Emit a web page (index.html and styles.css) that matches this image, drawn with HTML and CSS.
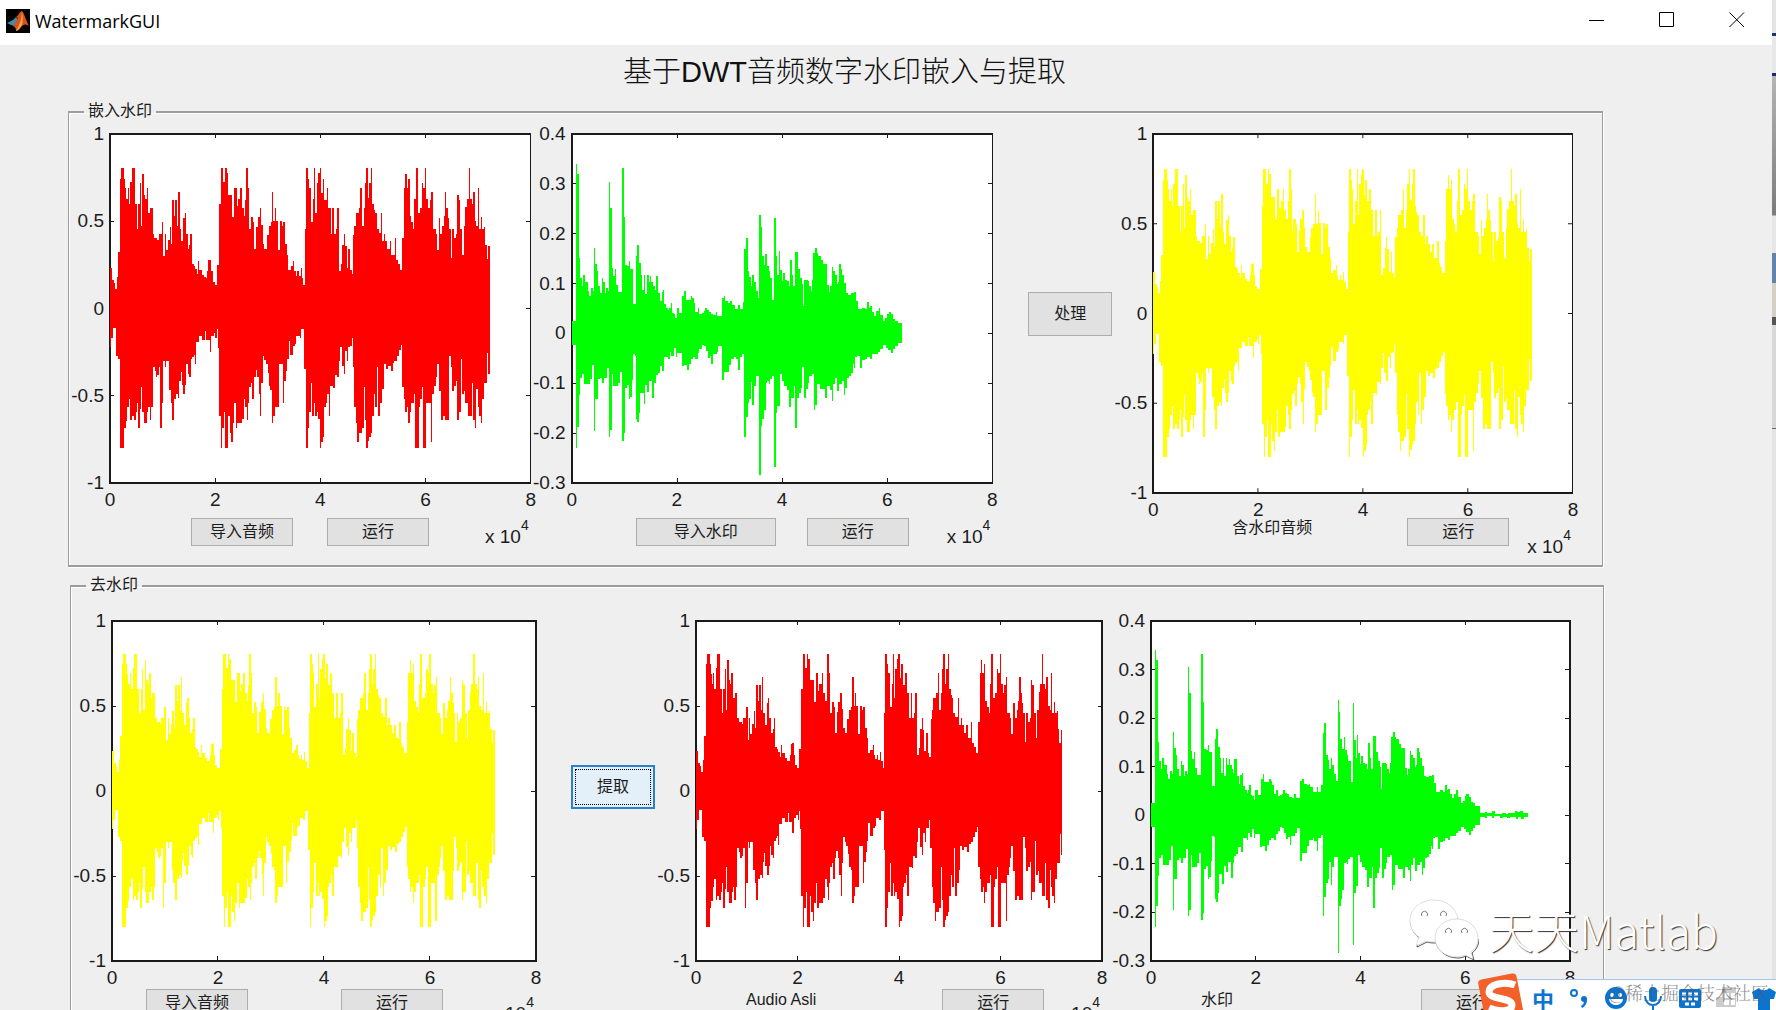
FILE: index.html
```html
<!DOCTYPE html>
<html lang="zh-CN">
<head>
  <meta charset="UTF-8" />
  <meta name="viewport" content="width=device-width, initial-scale=1.0" />
  <title>WatermarkGUI</title>
  <link rel="stylesheet" href="styles.css">
</head>
<body>
  <div class="desktop">
    <div class="window">
      <header class="titlebar">
        <svg class="app-icon" viewBox="0 0 24 24" aria-hidden="true">
          <rect width="24" height="24" fill="#000" />
          <path d="M1 14 L7 11 L10 8 L12 11 L8 17 L5 16 Z" fill="#3f8fa8" />
          <path d="M10 8 C13 6 14 2 16 2 C18 4 20 11 23 17 C20 15 18 15 16 17 C14 20 12 22 10 22 C10 19 9 18 7 17 C10 14 10 11 12 9 Z" fill="#d4541c" />
          <path d="M16 2 C16 9 14 15 10 22 C13 21 14 18 16 16 C17 12 17 7 16 2 Z" fill="#f5a04a" />
        </svg>
        <span class="app-name">WatermarkGUI</span>
        <button class="win-btn" aria-label="Minimize"><svg viewBox="0 0 16 16"><path d="M0 8.5H15" /></svg></button>
        <button class="win-btn" aria-label="Maximize"><svg viewBox="0 0 16 16"><path d="M.5 .5H14.5V14.5H.5Z" /></svg></button>
        <button class="win-btn" aria-label="Close"><svg viewBox="0 0 16 16"><path d="M.5 .5L15 15M15 .5L.5 15" /></svg></button>
      </header>

      <main>
        <h1>基于DWT音频数字水印嵌入与提取</h1>

        <fieldset class="panel embed">
          <legend>嵌入水印</legend>
          <div class="row">
            <div class="figure">
              <div class="ylabels"><span>1</span><span>0.5</span><span>0</span><span>-0.5</span><span>-1</span></div>
              <svg class="axes" data-wave="audio" data-color="#ff0000"></svg>
              <div class="xlabels"><span>0</span><span>2</span><span>4</span><span>6</span><span>8</span></div>
              <div class="controls import-audio">
                <button class="btn">导入音频</button>
                <button class="btn">运行</button>
                <span class="exponent">x 10<sup>4</sup></span>
              </div>
            </div>
            <div class="figure">
              <div class="ylabels"><span>0.4</span><span>0.3</span><span>0.2</span><span>0.1</span><span>0</span><span>-0.1</span><span>-0.2</span><span>-0.3</span></div>
              <svg class="axes" data-wave="mark" data-color="#00ff00"></svg>
              <div class="xlabels"><span>0</span><span>2</span><span>4</span><span>6</span><span>8</span></div>
              <div class="controls import-mark">
                <button class="btn wide">导入水印</button>
                <button class="btn">运行</button>
                <span class="exponent">x 10<sup>4</sup></span>
              </div>
            </div>
            <div class="action"><button class="btn big">处理</button></div>
            <div class="figure tall">
              <div class="ylabels"><span>1</span><span>0.5</span><span>0</span><span>-0.5</span><span>-1</span></div>
              <svg class="axes" data-wave="audio" data-color="#ffff00"></svg>
              <div class="xlabels"><span>0</span><span>2</span><span>4</span><span>6</span><span>8</span></div>
              <div class="controls">
                <span class="caption">含水印音频</span>
                <button class="btn">运行</button>
                <span class="exponent">x 10<sup>4</sup></span>
              </div>
            </div>
          </div>
        </fieldset>

        <fieldset class="panel extract">
          <legend>去水印</legend>
          <div class="row">
            <div class="figure">
              <div class="ylabels"><span>1</span><span>0.5</span><span>0</span><span>-0.5</span><span>-1</span></div>
              <svg class="axes" data-wave="audio" data-color="#ffff00"></svg>
              <div class="xlabels"><span>0</span><span>2</span><span>4</span><span>6</span><span>8</span></div>
              <div class="controls import-marked">
                <button class="btn">导入音频</button>
                <button class="btn">运行</button>
                <span class="exponent">x 10<sup>4</sup></span>
              </div>
            </div>
            <div class="action"><button class="btn big focused">提取</button></div>
            <div class="figure">
              <div class="ylabels"><span>1</span><span>0.5</span><span>0</span><span>-0.5</span><span>-1</span></div>
              <svg class="axes" data-wave="audio" data-color="#ff0000"></svg>
              <div class="xlabels"><span>0</span><span>2</span><span>4</span><span>6</span><span>8</span></div>
              <div class="controls result">
                <span class="caption">Audio Asli</span>
                <button class="btn">运行</button>
                <span class="exponent">x 10<sup>4</sup></span>
              </div>
            </div>
            <div class="figure spaced">
              <div class="ylabels"><span>0.4</span><span>0.3</span><span>0.2</span><span>0.1</span><span>0</span><span>-0.1</span><span>-0.2</span><span>-0.3</span></div>
              <svg class="axes" data-wave="mark" data-color="#00ff00" data-tail="1"></svg>
              <div class="xlabels"><span>0</span><span>2</span><span>4</span><span>6</span><span>8</span></div>
              <div class="controls result">
                <span class="caption">水印</span>
                <button class="btn">运行</button>
              </div>
            </div>
          </div>
        </fieldset>
      </main>
    </div>
    <div class="backdrop"></div>
  </div>

  <div class="signature">
    <svg viewBox="0 0 70 62" aria-hidden="true">
      <g class="shade" transform="translate(1 1)">
        <path d="M1 22c0 7 4 13 9 16l-3 9 10-5c3 1 6 1 10 1" />
        <path d="M50 20c-14 0-24 8-24 19s10 19 22 19c3 0 6-1 8-2l8 4-2-7c4-3 7-8 7-14" />
      </g>
      <path class="face" d="M25 1C11 1 1 10 1 22c0 7 4 13 9 16l-3 9 10-5c3 1 6 1 10 1 0-13 9-22 22-23C47 9 38 1 25 1z" />
      <path class="face" d="M48 20c-12 0-22 8-22 19s10 19 22 19c3 0 6-1 8-2l8 4-2-7c4-3 7-8 7-14 0-11-10-19-21-19z" />
      <path class="eyes" d="M13 17a3 3 0 1 1 5 0M32 17a3 3 0 1 1 5 0M37 34a3 3 0 1 1 5 0M53 34a3 3 0 1 1 5 0" />
    </svg>
    <span>天天Matlab</span>
  </div>

  <div class="ime">
    <svg class="sogou" viewBox="0 0 48 48" aria-hidden="true">
      <rect x="4" y="4" width="39" height="42" rx="4" transform="rotate(-11 24 24)" fill="#f4602a" />
      <path d="M38 13C28 9 12 12 12 20c0 8 23 5 23 13 0 7-14 7-23 3" fill="none" stroke="#fff" stroke-width="7" />
    </svg>
    <div class="ime-bar">
      <span class="ime-lang">中</span>
      <svg viewBox="0 0 24 24"><circle cx="7" cy="7" r="3" fill="none" stroke="#0b74d1" stroke-width="2" /><circle cx="17" cy="13" r="3" /><path d="M20 13c0 4-1 7-5 9l-1-2c2-1 3-3 3-5z" /></svg>
      <svg viewBox="0 0 24 24"><circle cx="12" cy="12" r="11" /><circle cx="8" cy="9" r="2" fill="#fff" /><circle cx="16" cy="9" r="2" fill="#fff" /><path d="M5 13h14c-1 8-13 8-14 0z" fill="#fff" /></svg>
      <svg viewBox="0 0 24 24"><rect x="8" y="1" width="8" height="15" rx="4" /><path d="M4 10c0 12 16 12 16 0M12 19v5" fill="none" stroke="#0b74d1" stroke-width="2" /></svg>
      <svg viewBox="0 0 24 24"><rect x="1" y="3" width="22" height="19" rx="2" /><path d="M4 8h16M4 13h16M7 18h10" stroke="#fff" stroke-width="3" stroke-dasharray="4 2" /></svg>
      <svg class="muted" viewBox="0 0 24 24"><path d="M7 1h14v20H1V11h6z" /><path d="M9 14h5v5H9zM16 14h4v5h-4zM9 7h5v5H9zM16 7h4v5h-4z" fill="#fff" /></svg>
      <svg viewBox="0 0 24 24"><path d="M7 2c2 3 8 3 10 0l7 4-2 7h-4v11H6V13H2L0 6z" /></svg>
    </div>
    <span class="community">@稀土掘金技术社区</span>
  </div>

  <script src="waves.js"></script>
</body>
</html>
```

FILE: waves.js
```js
// Envelopes as "x:level" steps on a 1260 x 1048 grid that starts at the origin below
const waves = {
  audio: {
    x: 151, y: 43, end: 1288, rows: 4,
    top: '151:445 157:480 162:490 166:508 172:472 176:397 181:177 185:145 193:177 197:205 200:238 204:204 208:252 212:188 217:145 225:252 231:328 236:252 240:190 244:318 248:163 252:226 257:238 261:204 266:279 271:266 279:342 284:355 293:362 298:342 306:307 311:409 316:342 320:392 325:360 330:321 334:373 338:240 343:290 347:240 352:318 356:217 360:328 365:363 371:295 375:279 379:342 384:387 389:376 392:343 397:432 402:438 406:448 411:462 415:425 419:450 428:465 433:473 439:475 443:455 446:422 450:420 454:455 458:486 464:495 472:437 478:253 482:145 490:188 496:145 500:160 504:226 513:226 517:292 523:204 530:260 534:238 541:204 545:266 551:290 556:240 559:145 564:204 567:328 572:292 579:307 583:387 588:322 593:292 599:266 604:315 608:373 613:387 621:345 626:318 632:307 636:217 640:305 645:266 649:304 655:392 661:304 666:318 670:307 676:373 681:405 685:450 692:440 699:425 703:455 707:468 712:455 716:470 722:446 725:476 730:495 735:328 739:145 744:177 748:204 752:307 758:238 762:145 766:279 770:190 775:160 779:145 784:220 788:177 792:240 800:204 805:266 812:342 817:266 822:342 828:328 832:266 837:455 842:433 847:376 851:343 855:378 860:445 865:387 870:450 875:462 879:345 883:318 888:280 897:265 901:204 906:318 911:266 915:190 919:145 924:236 928:190 933:145 937:252 941:270 945:279 950:328 956:340 963:280 967:363 972:342 976:363 982:387 990:365 994:405 1004:355 1009:420 1014:432 1020:450 1027:355 1031:204 1036:162 1040:204 1045:177 1049:290 1054:307 1059:328 1063:238 1067:145 1072:279 1080:266 1084:190 1089:204 1094:145 1098:238 1104:265 1108:240 1113:217 1117:328 1126:342 1130:392 1135:295 1140:342 1146:318 1150:290 1154:217 1158:266 1163:295 1167:328 1171:415 1176:328 1180:355 1186:343 1190:226 1195:240 1199:328 1205:405 1210:318 1215:262 1219:238 1225:145 1229:238 1235:252 1238:217 1243:304 1248:318 1253:204 1257:328 1262:292 1266:328 1270:321 1274:377 1279:418 1284:380',
    bottom: '151:684 153:655 161:626 170:710 176:720 181:985 193:927 198:905 203:863 208:838 212:903 217:890 222:903 228:877 231:850 235:927 240:870 244:802 248:877 253:912 262:877 266:863 270:903 275:863 279:742 285:755 289:774 293:768 298:742 302:927 306:850 311:725 316:742 320:725 328:812 333:850 338:903 343:838 350:825 355:836 359:785 363:757 366:798 371:825 376:798 380:735 385:764 389:774 393:720 398:712 403:707 406:733 410:668 417:650 426:662 436:635 440:662 450:697 454:650 462:640 466:655 470:630 474:685 478:890 483:985 487:927 492:877 496:985 504:890 509:940 514:967 518:912 523:850 527:927 532:912 546:898 551:838 556:863 560:903 564:850 568:802 574:790 577:838 582:774 587:752 591:774 596:825 600:890 604:790 608:710 613:723 618:735 623:760 627:800 631:812 636:912 640:890 645:863 658:735 668:850 672:785 678:755 682:720 686:665 690:707 700:680 705:675 709:650 720:657 724:630 733:750 738:985 743:927 748:877 752:790 757:890 762:850 766:890 770:877 775:900 780:985 784:967 789:952 793:863 797:850 802:825 806:890 811:800 820:805 824:768 832:774 836:725 841:682 846:740 851:765 856:695 862:725 865:682 871:680 875:657 878:742 883:863 887:912 892:967 896:940 906:927 911:802 915:903 919:985 924:965 928:952 933:940 937:890 942:825 946:863 951:742 955:890 960:850 966:810 971:735 978:750 984:740 992:755 998:730 1003:725 1010:710 1016:692 1022:678 1027:802 1032:838 1036:877 1041:863 1045:912 1049:877 1054:850 1062:825 1066:985 1075:863 1080:838 1085:802 1089:985 1098:850 1112:967 1116:825 1122:800 1126:774 1130:735 1135:815 1142:903 1148:890 1153:903 1165:815 1167:710 1172:742 1176:815 1181:800 1186:785 1190:903 1195:877 1202:720 1206:825 1211:815 1215:850 1224:890 1234:790 1238:903 1243:927 1248:810 1252:863 1257:890 1262:912 1266:838 1270:790 1280:700 1284:765'
  },
  mark: {
    x: 157, y: 43, end: 1145, rows: 7,
    top: '157:605 168:132 172:162 177:415 181:475 186:500 191:465 196:487 204:515 209:530 214:505 219:515 223:385 227:433 231:455 236:500 240:520 246:475 250:487 255:520 260:505 265:515 268:186 272:265 276:445 281:468 286:447 290:495 296:517 308:145 313:292 317:437 322:440 327:425 331:447 340:553 348:408 353:375 358:430 363:465 367:510 373:465 377:522 382:465 387:487 391:468 395:487 401:500 405:512 408:468 416:520 421:545 426:518 430:510 434:553 440:565 445:573 449:565 453:550 457:580 462:583 466:595 470:565 478:580 487:530 493:515 497:540 507:540 513:530 517:535 521:550 526:577 534:565 538:583 546:580 551:575 555:565 561:573 566:577 572:585 580:588 588:577 592:590 606:535 611:530 616:545 625:550 631:545 636:555 645:570 655:555 660:570 668:547 673:388 678:356 683:455 688:472 692:500 697:465 701:487 707:515 713:535 718:285 722:322 726:408 731:437 736:402 740:440 746:455 750:475 757:540 763:295 767:410 772:465 777:393 781:450 786:483 790:460 795:480 800:483 806:500 811:420 815:465 820:500 826:397 835:447 840:475 845:493 849:560 852:480 863:483 868:500 872:513 876:480 880:400 885:385 890:400 895:408 903:422 909:433 920:497 926:517 931:500 935:443 939:455 944:465 950:493 954:487 957:433 962:447 967:465 972:490 978:520 984:525 993:520 1003:517 1007:543 1015:570 1026:565 1034:570 1042:547 1046:565 1051:560 1056:577 1063:590 1069:575 1075:565 1080:587 1088:605 1094:597 1100:583 1105:577 1113:585 1118:600 1125:605 1132:612',
    bottom: '157:678 168:985 172:922 177:828 182:775 187:765 192:795 212:780 217:738 222:935 227:838 236:780 241:775 247:790 252:775 262:745 268:953 272:933 277:765 279:800 290:800 295:790 302:757 308:965 313:942 317:807 323:797 327:838 332:833 337:782 340:705 345:710 349:900 353:908 358:882 362:822 372:853 377:797 382:818 388:785 398:835 404:790 408:768 414:762 420:740 427:755 434:712 445:718 450:697 455:710 462:685 467:712 470:700 486:740 492:737 500:753 507:733 512:718 518:712 526:718 533:700 538:690 545:678 551:680 557:695 563:715 570:710 574:733 578:705 590:697 595:680 606:783 611:757 626:737 632:718 643:712 647:720 655:752 660:712 667:703 673:953 678:893 683:850 688:838 692:787 697:858 701:800 707:770 718:1067 722:920 727:900 732:872 737:790 742:785 746:793 750:778 755:770 763:1043 767:880 772:860 781:765 787:785 792:800 800:812 808:863 813:835 822:800 826:927 830:835 838:820 842:805 847:742 852:835 858:808 863:790 868:770 876:765 881:872 885:857 890:795 900:808 915:835 922:800 930:812 935:845 940:795 945:775 952:815 958:795 965:785 971:827 976:805 982:775 987:770 992:760 998:735 1002:745 1006:712 1012:710 1020:745 1025:723 1035:720 1042:712 1050:718 1056:705 1068:705 1073:697 1080:690 1088:678 1098:685 1104:692 1112:702 1118:690 1125:680 1132:672'
  }
};

// low noise left after the end of the recovered mark
const tail = 'M1145 635H1160V631H1166V636H1182V630H1190V637H1212V634H1224V638H1232V634H1252V629H1258V633H1266V630H1276V635H1292V647H1278V652H1270V648H1262V653H1254V647H1236V651H1228V646H1216V650H1206V645H1188V651H1182V645H1168V650H1160V646H1145Z';

function steps(text, wave) {
  return text.split(' ').map(pair => {
    const [x, y] = pair.split(':').map(Number);
    return [x - wave.x, y - wave.y];
  });
}

function wavePath(wave) {
  const top = steps(wave.top, wave);
  const bottom = steps(wave.bottom, wave).reverse();
  let d = `M0 ${top[0][1]}`;
  top.forEach(([x, y]) => { d += `H${x}V${y}`; });
  d += `H${wave.end - wave.x}`;
  bottom.forEach(([x, y]) => { d += `V${y}H${x}`; });
  return d + 'Z';
}

function tickPath(rows) {
  let d = '';
  for (let i = 1; i < 4; i++) {
    d += `M${i * 315} 0v12M${i * 315} 1048v-14`;
  }
  for (let i = 1; i < rows; i++) {
    const y = 1048 * i / rows;
    d += `M0 ${y}h12M1260 ${y}h-14`;
  }
  return d;
}

document.querySelectorAll('.axes').forEach(svg => {
  const wave = waves[svg.dataset.wave];
  svg.setAttribute('viewBox', '0 0 1260 1048');
  svg.setAttribute('preserveAspectRatio', 'none');
  svg.innerHTML = `
    <rect class="frame" width="1260" height="1048" />
    <path class="ticks" d="${tickPath(wave.rows)}" />
    <path d="${wavePath(wave)}" fill="${svg.dataset.color}" />`;
  if (svg.dataset.tail) {
    svg.innerHTML += `<path d="${tail}" transform="translate(${-wave.x} ${-wave.y})" fill="${svg.dataset.color}" />`;
  }
});
```

FILE: styles.css
```css
* {
  margin: 0;
  padding: 0;
  box-sizing: border-box;
}

body {
  height: 100vh;
  overflow: hidden;
  background: #efefef;
  color: #1c1c1c;
  font-family: "Liberation Sans", "Noto Sans CJK SC", sans-serif;
}

.desktop {
  display: flex;
  height: 100vh;
  overflow: hidden;
}

.window {
  flex: 1;
  min-width: 0;
}

/* sliver of the window behind */
.backdrop {
  width: 4px;
  background: linear-gradient(#e4e4e4 33px, #1c3664 33px 36px, #e8e8e8 36px 73px, #1c2c60 73px 76px, #b4b4b4 76px, #7c7c7c 215px, #e6e6e6 216px 253px, #6482aa 253px 283px, #d4d0c8 283px 317px, #555 317px 325px, #d8d8d8 325px 428px, #666 428px 429px, #e4e4e4 429px);
}

.titlebar {
  display: flex;
  align-items: center;
  height: 45px;
  padding: 0 0 3px 6px;
  background: #fff;
}

.app-icon {
  width: 24px;
  height: 24px;
}

.app-name {
  flex: 1;
  margin-left: 5px;
  font: 18px/24px "Open Sans", sans-serif;
  color: #000;
}

.win-btn {
  width: 70px;
  height: 42px;
  border: none;
  background: none;
}

.win-btn svg {
  width: 16px;
  height: 16px;
  fill: none;
  stroke: #000;
}

h1 {
  height: 57px;
  margin-right: 83px;
  font-size: 29px;
  font-weight: 300;
  line-height: 54px;
  text-align: center;
  color: #111;
}

.panel {
  min-width: 0;
  margin: 0 169px 9px 68px;
  border: 1px solid #9c9c9c;
  border-top-width: 2px;
  border-bottom-width: 2px;
  box-shadow: 1px 1px 0 #fff, inset 1px 1px 0 #fff;
}

.panel legend {
  height: 20px;
  margin-left: 15px;
  padding: 0 4px;
  font-size: 16px;
  line-height: 17px;
}

.row {
  display: grid;
}

.embed .row {
  grid-template-columns: 462fr 462fr 120fr 461fr;
  padding: 12px 29px 8px 0;
}

.extract {
  margin-left: 70px;
  margin-right: 168px;
}

.extract .row {
  grid-template-columns: 466fr 116fr 448fr 469fr;
  padding: 25px 33px 20px 0;
}

.figure {
  display: grid;
  grid-template-columns: 41px 1fr;
  align-content: start;
  min-width: 0;
  font-size: 19px;
  line-height: 20px;
}

.figure.spaced {
  padding-left: 8px;
}

.axes {
  width: 100%;
  height: 349px;
  overflow: visible;
  shape-rendering: crispEdges;
}

.tall .axes {
  height: 359px;
}

.extract .axes {
  height: 340px;
}

.frame {
  fill: #fff;
  stroke: #1a1a1a;
  stroke-width: 1.5px;
  vector-effect: non-scaling-stroke;
}

.ticks {
  fill: none;
  stroke: #1a1a1a;
  stroke-width: 1px;
  vector-effect: non-scaling-stroke;
}

.ylabels {
  display: flex;
  flex-direction: column;
  justify-content: space-between;
  align-items: flex-end;
  margin: -10px 0;
  padding-right: 6px;
  white-space: nowrap;
}

.xlabels {
  grid-column: 2;
  display: flex;
  justify-content: space-between;
  margin: 7px -10px 0;
}

.xlabels span {
  width: 20px;
  text-align: center;
}

.controls {
  grid-column: 2;
  display: flex;
  align-items: flex-start;
  margin-top: 8px;
}

.tall .controls {
  margin-top: -2px;
  padding-left: 79px;
}

.extract .controls {
  margin-top: 1px;
}

.import-audio {
  padding-left: 81px;
}

.import-mark {
  padding-left: 64px;
}

.import-marked {
  padding-left: 34px;
}

.result {
  padding-left: 50px;
}

.btn {
  flex: none;
  width: 102px;
  height: 28px;
  border: 1px solid #adadad;
  background: #e1e1e1;
  color: #1c1c1c;
  font-family: inherit;
  font-size: 16px;
  line-height: 24px;
}

.import-audio .btn + .btn {
  margin-left: 34px;
}

.import-mark .btn + .btn {
  margin-left: 31px;
}

.import-marked .btn + .btn {
  margin-left: 93px;
}

.btn.wide {
  width: 140px;
}

.btn.big {
  width: 84px;
  height: 44px;
}

.btn.focused {
  border: 2px solid #2a82cc;
  background: #e3f0fa;
  outline: 1px dotted #000;
  outline-offset: -5px;
}

.action {
  display: flex;
  align-items: center;
  justify-content: flex-end;
  height: 360px;
}

.extract .action {
  justify-content: flex-start;
  height: 332px;
  padding-left: 35px;
}

.caption {
  flex: 1;
  font-size: 16px;
  white-space: nowrap;
}

.result .caption {
  line-height: 22px;
}

.exponent {
  margin: 7px 2px 0 auto;
  white-space: nowrap;
}

.tall .exponent {
  margin-top: 17px;
  margin-left: 18px;
}

.extract .exponent {
  margin-top: 13px;
}

.result .exponent {
  margin-left: 12px;
}

.result .btn:last-child {
  margin-right: 47px;
}

.exponent sup {
  font-size: 14px;
  line-height: 0;
  vertical-align: 13px;
}

.signature {
  position: absolute;
  right: 58px;
  bottom: 48px;
  display: flex;
  align-items: center;
  gap: 10px;
  color: #fff;
  font-family: "Noto Sans CJK SC", sans-serif;
  font-size: 45px;
  font-weight: 300;
  line-height: 64px;
  text-shadow: 1px 1px 1px #333;
}

.signature svg {
  width: 70px;
  height: 62px;
}

.shade {
  fill: none;
  stroke: #555;
  stroke-width: 1px;
}

.face {
  fill: #fff;
  stroke: #bbb;
  stroke-width: 0.5px;
}

.eyes {
  fill: none;
  stroke: #777;
  stroke-width: 1px;
}

.ime {
  position: absolute;
  right: 0;
  bottom: 0;
  width: 300px;
  height: 38px;
  overflow: hidden;
}

.ime-bar {
  display: flex;
  align-items: flex-start;
  justify-content: space-between;
  height: 31px;
  margin: 7px 0 0 40px;
  padding: 6px 0 0 16px;
  border-top: 1px solid #a9c6e6;
  background: #fff;
}

.ime-bar svg {
  flex: none;
  width: 24px;
  height: 24px;
  fill: #0b74d1;
}

.ime-bar .muted {
  fill: #ccc;
}

.ime-lang {
  color: #0b74d1;
  font: bold 22px/24px "Noto Sans CJK SC", sans-serif;
}

.sogou {
  position: absolute;
  left: 1px;
  top: 0;
  width: 48px;
  height: 48px;
}

.community {
  position: absolute;
  right: 7px;
  top: 7px;
  color: rgba(90, 90, 90, 0.7);
  font: 300 18px/26px "Noto Serif CJK SC", "Noto Sans CJK SC", sans-serif;
}
```
